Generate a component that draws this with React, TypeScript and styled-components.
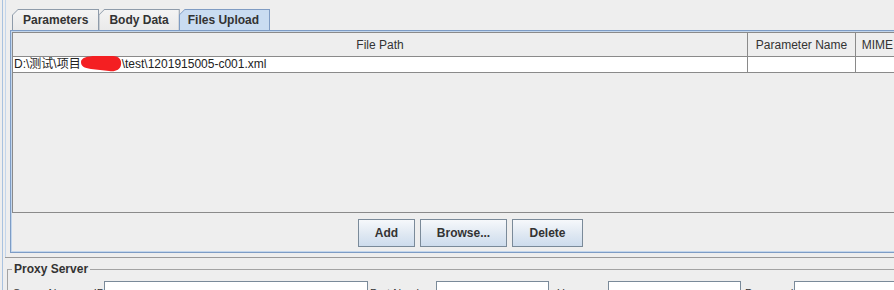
import styled, { createGlobalStyle } from 'styled-components';

const GlobalStyle = createGlobalStyle`
  * { box-sizing: border-box; }
  html, body {
    margin: 0;
    padding: 0;
    background: #eeeeee;
    overflow: hidden;
  }
  body {
    font-family: "Liberation Sans", Arial, "Noto Sans CJK SC", sans-serif;
    font-size: 12px;
    color: #333333;
  }
`;

const tabs = ['Parameters', 'Body Data', 'Files Upload'];

const buttons = [
  { text: 'Add', width: 57 },
  { text: 'Browse...', width: 87 },
  { text: 'Delete', width: 71 },
];

const proxyFields = [
  { label: 'Server Name or IP:', labelWidth: 94, pad: 3, inputWidth: 264 },
  { label: 'Port Number:', labelWidth: 68, pad: 2, inputWidth: 113 },
  { label: 'Username', labelWidth: 59, pad: 8, inputWidth: 133 },
  { label: 'Password', labelWidth: 53, pad: 4, inputWidth: 140 },
];

function Redaction() {
  return (
    <Blob width="42" height="17" viewBox="0 0 42 17">
      <path
        d="M1 7 C1 3 7 1 16 1 L33 1 C39 1 42 5 41 10 C40 15 35 17 29 16 L11 14 C4 13 1 11 1 7 Z"
        fill="#f41f22"
      />
    </Blob>
  );
}

export default function App() {
  return (
    <>
      <GlobalStyle />
      <Frame>
        <Rail>
          <TabSection>
            <TabRow>
              {tabs.map((t) => (
                <Tab key={t} $active={t === 'Files Upload'}>
                  <TabFace $active={t === 'Files Upload'}>{t}</TabFace>
                </Tab>
              ))}
            </TabRow>
            <TabPanel>
              <ScrollPane>
                <Table>
                  <HeaderCell>File Path</HeaderCell>
                  <HeaderCell>Parameter Name</HeaderCell>
                  <HeaderCell>MIME Type</HeaderCell>
                  <Cell>
                    D:\测试\项目<Redaction />\test\1201915005-c001.xml
                  </Cell>
                  <Cell />
                  <Cell />
                </Table>
              </ScrollPane>
              <ButtonRow>
                {buttons.map((b) => (
                  <Button key={b.text} $w={b.width}>{b.text}</Button>
                ))}
              </ButtonRow>
            </TabPanel>
          </TabSection>
          <LowerSection>
            <TitledBox>
              <Legend>Proxy Server</Legend>
              <FieldRow>
                {proxyFields.map((f) => (
                  <Field key={f.label}>
                    <Label $w={f.labelWidth} $pad={f.pad}>{f.label}</Label>
                    <TextInput $w={f.inputWidth} />
                  </Field>
                ))}
              </FieldRow>
            </TitledBox>
          </LowerSection>
        </Rail>
      </Frame>
    </>
  );
}

const Frame = styled.div`
  width: 929px;
  height: 290px;
  padding-left: 2px;
`;

const Rail = styled.div`
  height: 100%;
  border-left: 1px solid #a9c2df;
  padding-left: 2px;
`;

const TabSection = styled.div`
  border-left: 1px solid #c4d6eb;
  padding: 9px 0 4px 4px;
`;

const TabRow = styled.div`
  display: flex;
  align-items: flex-end;
  height: 21px;
  padding-left: 2px;
`;

const Tab = styled.div<{ $active?: boolean }>`
  height: 21px;
  padding: 1px 1px 0 1px;
  margin-right: -1px;
  background: ${(p) => (p.$active ? '#7f9cc3' : '#8e9baa')};
  clip-path: polygon(6px 0, 100% 0, 100% 100%, 0 100%, 0 6px);
`;

const TabFace = styled.div<{ $active?: boolean }>`
  height: 100%;
  display: flex;
  align-items: center;
  padding: ${(p) => (p.$active ? '0 10px 0 8px' : '0 10px 0 10px')};
  font-weight: bold;
  color: #333333;
  background: ${(p) => (p.$active ? '#c9dcf1' : 'linear-gradient(#f4f4f4, #eaeaea)')};
  clip-path: polygon(5px 0, 100% 0, 100% 100%, 0 100%, 0 5px);
`;

const TabPanel = styled.div`
  border: 1px solid #7d9cc5;
  border-right: none;
  box-shadow: inset 1px 1px 0 #c3d6ec, inset 0 -1px 0 #c3d6ec;
  padding: 1px 0 0 1px;
`;

const ScrollPane = styled.div`
  height: 181px;
  border: 1px solid #8a8a8a;
  border-right: none;
  overflow: hidden;
`;

const Table = styled.div`
  display: grid;
  grid-template-columns: 735px 108px 1fr;
`;

const HeaderCell = styled.div`
  height: 24px;
  display: flex;
  align-items: center;
  justify-content: center;
  border-right: 1px solid #8a8a8a;
  border-bottom: 1px solid #8a8a8a;
  background: #eeeeee;
  color: #333333;
  white-space: nowrap;
`;

const Cell = styled.div`
  height: 16px;
  line-height: 15px;
  padding-left: 1px;
  background: #ffffff;
  border-right: 1px solid #8a8a8a;
  border-bottom: 1px solid #8a8a8a;
  color: #222222;
  white-space: nowrap;
`;

const Blob = styled.svg`
  display: inline-block;
  vertical-align: -4px;
  margin: -2px 0 0 -1px;
`;

const ButtonRow = styled.div`
  display: flex;
  justify-content: center;
  gap: 5px;
  padding: 6px 0 5px;
`;

const Button = styled.button<{ $w: number }>`
  width: ${(p) => p.$w}px;
  height: 28px;
  padding: 0;
  border: 1px solid #7a8a99;
  border-radius: 0;
  background: linear-gradient(#f6f8fb, #dfe8f2 55%, #cddced);
  font-family: "Liberation Sans", Arial, sans-serif;
  font-size: 12px;
  font-weight: bold;
  color: #333333;
`;

const LowerSection = styled.div`
  border-top: 1px solid #9a9a9a;
  padding: 4px 0 0 2px;
`;

const TitledBox = styled.fieldset`
  margin: 0;
  padding: 0 2px;
  border: 1px solid #a3a3a3;
  border-right: none;
  border-bottom: none;
`;

const Legend = styled.legend`
  margin-left: 2px;
  padding: 0 2px;
  font-size: 12px;
  line-height: 14px;
  font-weight: bold;
  color: #333333;
`;

const FieldRow = styled.div`
  display: flex;
  align-items: center;
  margin-top: 5px;
`;

const Field = styled.div`
  display: flex;
  align-items: center;
`;

const Label = styled.span<{ $w: number; $pad: number }>`
  width: ${(p) => p.$w}px;
  padding-left: ${(p) => p.$pad}px;
  font-size: 11px;
  line-height: 14px;
  white-space: nowrap;
  color: #333333;
`;

const TextInput = styled.div<{ $w: number }>`
  width: ${(p) => p.$w}px;
  height: 24px;
  background: #ffffff;
  border: 1px solid #7a8a99;
`;
